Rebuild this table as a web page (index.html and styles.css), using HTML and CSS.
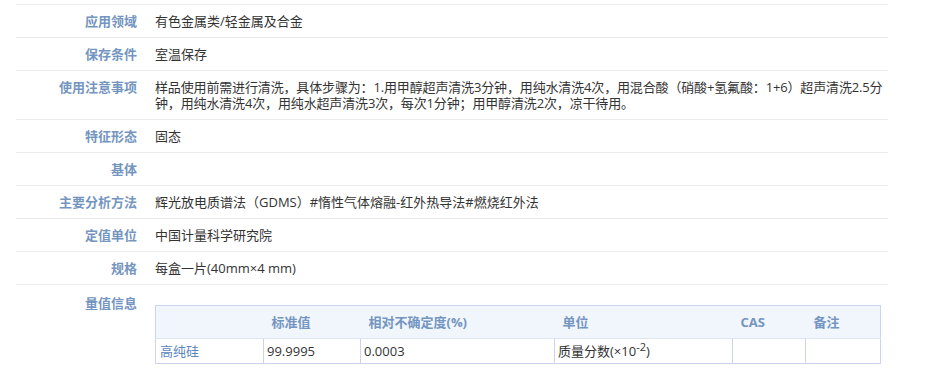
FILE: index.html
```html
<!DOCTYPE html>
<html lang="zh">
<head>
<meta charset="utf-8">
<link rel="stylesheet" href="styles.css">
</head>
<body>
<div class="info">
  <div class="row"><div class="label">应用领域</div><div class="value">有色金属类/轻金属及合金</div></div>
  <div class="row"><div class="label">保存条件</div><div class="value">室温保存</div></div>
  <div class="row"><div class="label">使用注意事项</div><div class="value notes">样品使用前需进行清洗，具体步骤为：1.用甲醇超声清洗3分钟，用纯水清洗4次，用混合酸（硝酸+氢氟酸：1+6）超声清洗2.5分钟，用纯水清洗4次，用纯水超声清洗3次，每次1分钟；用甲醇清洗2次，凉干待用。</div></div>
  <div class="row"><div class="label">特征形态</div><div class="value">固态</div></div>
  <div class="row"><div class="label">基体</div><div class="value"></div></div>
  <div class="row"><div class="label">主要分析方法</div><div class="value">辉光放电质谱法（GDMS）#惰性气体熔融-红外热导法#燃烧红外法</div></div>
  <div class="row"><div class="label">定值单位</div><div class="value">中国计量科学研究院</div></div>
  <div class="row"><div class="label">规格</div><div class="value">每盒一片(40mm×4 mm)</div></div>
  <div class="row last"><div class="label">量值信息</div>
    <div class="value">
      <table class="qty">
        <colgroup>
          <col class="c1"><col class="c2"><col class="c3"><col class="c4"><col class="c5"><col class="c6">
        </colgroup>
        <thead>
          <tr><th></th><th>标准值</th><th>相对不确定度(%)</th><th>单位</th><th>CAS</th><th>备注</th></tr>
        </thead>
        <tbody>
          <tr><td class="name">高纯硅</td><td>99.9995</td><td>0.0003</td><td>质量分数(×10<sup>-2</sup>)</td><td></td><td></td></tr>
        </tbody>
      </table>
    </div>
  </div>
</div>
</body>
</html>
```
FILE: styles.css
```css
html, body {
  margin: 0;
  padding: 0;
  background: #fff;
}
body {
  font-family: "Open Sans", "Noto Sans CJK SC", sans-serif;
  font-size: 13px;
  color: #333;
}
.info {
  width: 872px;
  margin-left: 16px;
  padding-top: 4px;
}
.row {
  display: grid;
  grid-template-columns: 121px 1fr;
  column-gap: 18px;
  border-top: 1px solid #ececec;
  line-height: 16px;
}
.label {
  text-align: right;
  font-weight: bold;
  color: #7495c0;
  padding: 8px 0;
}
.value {
  padding: 8px 0;
}
.value.notes {
  letter-spacing: -0.15px;
}
.row.last .label {
  padding-top: 10px;
}
.row.last .value {
  padding: 20px 0 0 0;
}
.qty {
  border-collapse: collapse;
  width: 725px;
  table-layout: fixed;
  border: 1px solid #cdd3ea;
}
.c1 { width: 108px; }
.c2 { width: 97px; }
.c3 { width: 194px; }
.c4 { width: 178px; }
.c5 { width: 73px; }
.c6 { width: 75px; }
.qty th {
  background: #f0f6fc;
  color: #7495c0;
  font-weight: bold;
  text-align: left;
  height: 32px;
  padding: 0 8px;
  border-bottom: 1px solid #dfe4f1;
}
.qty td {
  height: 24px;
  padding: 0 3px;
  border: 1px solid #cdd3ea;
  color: #333;
}
.qty td.name {
  color: #5b86bd;
  padding-left: 4px;
}
.qty sup {
  font-size: 11px;
  line-height: 0;
  vertical-align: 5px;
}
```
